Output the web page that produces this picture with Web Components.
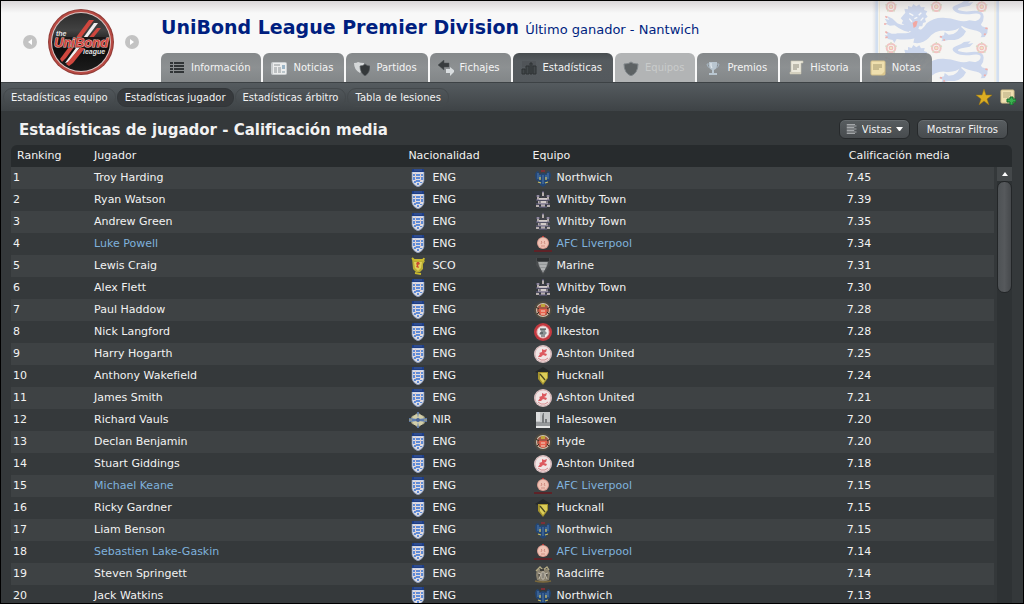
<!DOCTYPE html>
<html lang="es">
<head>
<meta charset="utf-8">
<title>UniBond League Premier Division</title>
<style>
body {
  margin: 0;
  background: #34383a;
  color: #f2f2f2;
  font-family: "DejaVu Sans", sans-serif;
  font-size: 11px;
}
</style>
</head>
<body>
<league-screen>
  <league-header slot="header" name="UniBond League Premier Division" note="Último ganador - Nantwich">
    <header-tab icon="list">Información</header-tab>
    <header-tab icon="news">Noticias</header-tab>
    <header-tab icon="shields">Partidos</header-tab>
    <header-tab icon="arrows">Fichajes</header-tab>
    <header-tab icon="chart" active>Estadísticas</header-tab>
    <header-tab icon="shield" disabled>Equipos</header-tab>
    <header-tab icon="cup">Premios</header-tab>
    <header-tab icon="scroll">Historia</header-tab>
    <header-tab icon="note">Notas</header-tab>
  </league-header>
  <sub-nav slot="nav">
    <sub-link>Estadísticas equipo</sub-link>
    <sub-link active>Estadísticas jugador</sub-link>
    <sub-link>Estadísticas árbitro</sub-link>
    <sub-link>Tabla de lesiones</sub-link>
  </sub-nav>
  <stats-toolbar slot="toolbar">Estadísticas de jugador - Calificación media</stats-toolbar>
  <player-ranking slot="list"></player-ranking>
</league-screen>

<script>
const icons = {
  list: `<g fill="#303436"><path d="M1 2h3v2H1zM5 2h10v2H5zM1 5h3v2H1zM5 5h10v2H5zM1 8h3v2H1zM5 8h10v2H5zM1 11h3v2H1zM5 11h10v2H5z"/></g>`,
  news: `<rect x="0" y="2" width="16" height="13" rx="2" fill="#c9cdcf"/><rect x="2" y="3" width="13" height="11" fill="#eceded"/>
    <path d="M3 5h6M3 8h3M7 8h3M3 10h3M7 10h3M3 12h3M7 12h3" stroke="#8d9396"/><rect x="11" y="5" width="3" height="4" fill="#9ab4c6"/><path d="M11 11h3v2h-3z" fill="#b9c4ca"/>`,
  shields: `<path d="M0 3q3 0 4-1 2 1 6 1v4l-4 6Q0 10 0 3z" fill="#d5d8d9"/><path d="M6 6q3 0 5-2 2 2 5 2 0 7-5 10-5-3-5-10z" fill="#34383a" stroke="#5d6264" stroke-width=".7"/>`,
  arrows: `<path d="M0 5l6-5v3h5v4H6v3z" fill="#383c3e" stroke="#4d5254" stroke-width=".5"/><path d="M17 11l-5-4v2H8v4h4v3z" fill="#d9dddf"/>`,
  chart: `<path d="M1 2h14M1 4h14M1 6h14" stroke="#4a4f52"/><g fill="#43484b" stroke="#2e3235"><path d="M1 9h3v5H1zM5 6h3v8H5zM9 3h2v11H9zM12 6h3v8h-3z"/></g>`,
  shield: `<path d="M1 4q5 0 7-2 2 2 7 2 0 9-7 12-7-3-7-12z" fill="#5d6264" stroke="#80868a"/>`,
  cup: `<path d="M4 2h8v3q0 4-3 5v3h3v2H4v-2h3v-3Q4 9 4 5z" fill="#b9c6d0"/><path d="M4 4H2q0 3 3 4M12 4h2q0 3-3 4" fill="none" stroke="#a7b6c2"/><path d="M6 3v3l1 2" stroke="#e8eef2" fill="none"/>`,
  scroll: `<path d="M3 1h12v2h-2v11H2v-2h1z" fill="#ece9dd" stroke="#c6c2b0" stroke-width=".6"/><path d="M5 5h6M5 7h6M5 9h4" stroke="#8e8b7d"/><path d="M2 12h11v2H2z" fill="#d3cfbe"/>`,
  note: `<rect x="1" y="1" width="14" height="14" rx="1" fill="#efdfae" stroke="#d3c08a"/><path d="M3 5h9M3 7h9M3 9h6" stroke="#a4986f"/><path d="M15 11l-4 4h4z" fill="#d9c58d"/>`,
  noteAdd: `<rect x="1" y="1" width="13" height="13" rx="1" fill="#f0e0b2" stroke="#d5c28d"/><path d="M3 4h8M3 6h8M3 8h6" stroke="#b5a87e"/><path d="M10 8h3v2h3v3h-3v3h-3v-3H7v-3h3z" fill="#3bb150" stroke="#14692a"/>`,
  star: `<path d="M8 0l2 6h6l-5 4 2 6-5-4-5 4 2-6-5-4h6z" fill="#dcae22" stroke="#9b7511" stroke-width=".5"/>`,
  lines: `<path d="M1 2h11M1 4h13M1 6h10M1 8h13M1 10h10M1 12h13M1 14h11" stroke="#c0c3c5"/>`
};

const crests = {
  eng: `<path d="M3 1h12v11q-1 4-6 6-5-2-6-6z" fill="#cfd6e6"/><path d="M4 4h10v8q-1 3-5 5-4-2-5-5z" fill="#e0dde2"/><path d="M3 0h12v3H3z" fill="#1d3d86"/><path d="M5 1h8" stroke="#4a64a0" stroke-width=".8"/>
    <g fill="#5f8bd6"><path d="M4 5h2v2H4zM7 5h4v2H7zM12 5h2v2h-2zM4 8h2v3H4zM7 8h4v2H7zM12 8h2v3h-2zM5 12h2v2H5zM7 11h4v2H7zM11 13h2v1h-2zM8 14h2v2H8z"/></g>
    <path d="M6 5h1M11 5h1M6 8h1M11 8h1M6 11h1M11 11h1" stroke="#e3b0a6"/><path d="M3 3v9q1 4 6 6 5-2 6-6V3" fill="none" stroke="#7d8cae" stroke-width=".7"/>`,
  sco: `<path d="M3 1l3 2h8l2 1-2 3v5l-3 3H7l-3-3z" fill="#b9ad34"/><path d="M3 1l2 2M15 1l-1 3M6 16l6 1M5 3h9" stroke="#c8b92f" stroke-width="2"/><path d="M5 5h8l-1 6-3 3-3-3z" fill="#e0d25a"/><path d="M8 5h2l1 2-2 1 1 3-3-1 1-2-1-1z" fill="#c94a32"/>`,
  nir: `<path d="M9 1l3 3 3 1 2 4-2 4-3 1-3 3-3-3-3-1-2-4 2-4 3-1z" fill="#a9a682"/><circle cx="9" cy="9" r="6" fill="#d2cea9"/><path d="M8 1h2l-1 6 1 1 8-1v4l-8-1-1 1 1 6H8l1-6-1-1-8 1V7l8 1 1-1z" fill="#5d7cb0"/><circle cx="9" cy="9" r="2" fill="#4a6699"/><path d="M0 9h3M15 9h3" stroke="#b7ac6d"/>`,
  northwich: `<path d="M9 4L6 5 4 2 2 3 1 6l1 5 3 2 1 3 3 2 3-2 1-3 3-2 1-5-1-3-2-1-2 3z" fill="#234674"/><path d="M4 4v6M14 4v6M9 6v9M6 6v4M12 6v4" stroke="#4a74a8" stroke-width="1.2"/><path d="M6 8v3M12 8v3M4 13l3 1M14 13l-3 1" stroke="#c9bd62" stroke-width="1.3"/><path d="M7 1h4v2H7z" fill="#7c3038"/>`,
  whitby: `<path d="M8 1h2v4H8zM3 4h2v3H3zM13 4h2v3h-2zM3 7h12v2H3zM4 10h10v3H4zM2 14h3v2H2zM7 13h4v3H7zM13 14h3v2h-3z" fill="#b5adac"/><path d="M2 5h4M12 5h4M2 9h14M2 13h14M5 16h8M9 0v2" stroke="#6a648a"/><path d="M5 8h8M6 11h6" stroke="#ece5e3"/><path d="M7 6h4M5 11h2M12 11h2" stroke="#494454"/>`,
  liverpool: `<circle cx="9" cy="8" r="6" fill="#dd9f93"/><circle cx="9" cy="8" r="5" fill="#efc3b5"/><path d="M7 6l1 1-1 2M11 6l-1 1 1 2M7 11h4" stroke="#d08e82" fill="none"/><path d="M8 1h2v1H8z" fill="#b73935"/><path d="M0 15h18v2H0z" fill="#5e2227"/>`,
  marine: `<path d="M2 1h14v7l-7 10-7-10z" fill="#484b4d"/><path d="M3 1h12v3H3z" fill="#2d3032"/><path d="M4 5h10l-1 4-4 7-4-7z" fill="#96999a"/><path d="M5 6h8" stroke="#b9bbbc"/><path d="M6 9h6M7 12h4" stroke="#c9cacb"/>`,
  hyde: `<circle cx="9" cy="9" r="9" fill="#4d4940"/><circle cx="9" cy="9" r="7" fill="#cfc4b0"/><circle cx="9" cy="9" r="6" fill="#a55645"/><path d="M5 8h8l-1 5-3 2-3-2z" fill="#e8614d"/><path d="M7 10h4M7 13h4" stroke="#f0d9c4"/><path d="M7 3h4v3H7z" fill="#c0a53c"/><path d="M2 6l3 2M16 6l-3 2M3 13l2-2M15 13l-2-2" stroke="#342e27"/>`,
  ilkeston: `<circle cx="9" cy="9" r="9" fill="#c43a40"/><circle cx="9" cy="9" r="6" fill="#eee9e9" stroke="#e8b3b4"/><path d="M6 6h6l-1 2 2 2-2 2H7l-2-1 2-2z" fill="#8b9294"/><path d="M6 6h6M6 10h3M7 13h4" stroke="#3a4143"/>`,
  ashton: `<circle cx="9" cy="9" r="9" fill="#dcc9c9"/><circle cx="9" cy="9" r="8" fill="#f0e4e4" stroke="#cf9fa1" stroke-width=".6"/><path d="M8 4l2 1 3-1-1 3-2 1 3 1-1 2-3-1-2 2-3 0 2-3-1-1 3-1z" fill="#dc5a60"/><path d="M4 13l3 2h4l3-2" stroke="#d88b8e" fill="none"/>`,
  hucknall: `<path d="M9 0l8 5-3 1H4L1 5z" fill="#26292a"/><path d="M4 5h10v6l-5 7-5-6z" fill="#a5942f"/><path d="M6 6h7v5l-4 5-3-4z" fill="#dccd58"/><path d="M6 7l5 6" stroke="#4b4822" stroke-width="1.3"/>`,
  halesowen: `<rect x="2" y="1" width="14" height="16" fill="#c4c6c7"/><path d="M2 11h14v4H2z" fill="#96999b"/><path d="M9 2h1v10H8V5zM11 8h2v4h-2z" fill="#777a7c"/><path d="M2 15h14v2H2z" fill="#e6e7e7"/><path d="M2 1h4v9H2z" fill="#dddedf"/>`,
  radcliffe: `<path d="M3 4h11l2 4-1 7-6 2-6-2-1-5z" fill="#8a8270"/><path d="M2 6l4-4 3 3 4-3 2 3" stroke="#b4aa84" stroke-width="1.3" fill="none"/><path d="M4 8l3 1-2 5M14 8l-3 1 2 5M8 7h2v7H8z" stroke="#c3bdb0" fill="#55514a"/><path d="M1 16q8 2 16 0" stroke="#7a683c" stroke-width="1.5" fill="none"/><path d="M6 4h4v2H6z" fill="#43413c"/>`
};

const svgIcon = (name) => `<svg width="16" height="16" viewBox="0 0 16 16" aria-hidden="true">${icons[name]}</svg>`;

// player, nation, crest key, club, rating
const players = [
  ["Troy Harding", "ENG", "northwich", "Northwich", "7.45"],
  ["Ryan Watson", "ENG", "whitby", "Whitby Town", "7.39"],
  ["Andrew Green", "ENG", "whitby", "Whitby Town", "7.35"],
  ["Luke Powell", "ENG", "liverpool", "AFC Liverpool", "7.34"],
  ["Lewis Craig", "SCO", "marine", "Marine", "7.31"],
  ["Alex Flett", "ENG", "whitby", "Whitby Town", "7.30"],
  ["Paul Haddow", "ENG", "hyde", "Hyde", "7.28"],
  ["Nick Langford", "ENG", "ilkeston", "Ilkeston", "7.28"],
  ["Harry Hogarth", "ENG", "ashton", "Ashton United", "7.25"],
  ["Anthony Wakefield", "ENG", "hucknall", "Hucknall", "7.24"],
  ["James Smith", "ENG", "ashton", "Ashton United", "7.21"],
  ["Richard Vauls", "NIR", "halesowen", "Halesowen", "7.20"],
  ["Declan Benjamin", "ENG", "hyde", "Hyde", "7.20"],
  ["Stuart Giddings", "ENG", "ashton", "Ashton United", "7.18"],
  ["Michael Keane", "ENG", "liverpool", "AFC Liverpool", "7.15"],
  ["Ricky Gardner", "ENG", "hucknall", "Hucknall", "7.15"],
  ["Liam Benson", "ENG", "northwich", "Northwich", "7.15"],
  ["Sebastien Lake-Gaskin", "ENG", "liverpool", "AFC Liverpool", "7.14"],
  ["Steven Springett", "ENG", "radcliffe", "Radcliffe", "7.14"],
  ["Jack Watkins", "ENG", "northwich", "Northwich", "7.13"]
];

class ShadowElement extends HTMLElement {
  connectedCallback() {
    if (this.shadowRoot) return;
    this.attachShadow({ mode: "open" });
    this.shadowRoot.innerHTML = this.render();
  }
}

class LeagueScreen extends ShadowElement {
  render() {
    return `
<style>
:host {
  box-sizing: border-box;
  display: flex;
  flex-direction: column;
  height: 100vh;
  overflow: hidden;
  border: 1px solid #000;
  background: #34383a;
}
.list {
  flex: 1;
  min-height: 0;
  overflow: hidden;
  display: grid;
  padding: 0 11px 0 10px;
}
</style>
<slot name="header"></slot>
<slot name="nav"></slot>
<slot name="toolbar"></slot>
<main class="list"><slot name="list"></slot></main>
`;
  }
}

class LionCrest extends ShadowElement {
  render() {
    return `
<style>
:host { display: block; }
svg { display: block; }
</style>
<svg width="130" height="81" viewBox="36 3 390 243" aria-hidden="true">
  <defs>
    <g id="lion" fill="#ccd7ed">
      <path d="M136 38l-3-12 11 2 0-10 11 3 5-9 9 7 9-6 5 9 11-1-2 9 10 4-5 8 6 8-8 6 3 10-9 3-2 10-9 0-4 10-10 1-4 9-11-6-7-8-7 2-2-12-8-5 4-8-7-7z"/>
      <path d="M140 74q-14 4-28-4l-14-14-12-6-6-2 8 12-14-4 8 12-8 2 16 7 14-1q12 10 28 16l14 4 10-12z"/>
      <path d="M168 84q-14 14-30 16l-26 0q-12 4-24-2l-10-4 5 12-9-1 10 12 14 3 5 9 7-12q30 4 56-2l26-10 6-10z"/>
      <path d="M168 94q20-2 32-24 20-18 50-17 24 1 42 8 20 6 36 0 34 2 38 18l17 6-1 14-8 12-12 1q10-14-12-20-28-4-44-14-20 18-52 14-28-2-48 22-20 20-46 14z"/>
      <path d="M300 78q-4 16-20 24l-14 2-12-8-2 10-16 4 12 6-4 8 22-4 18 0q24-4 34-26z"/>
      <path d="M336 66q26-4 26-18 0-10-22-7-36 5-53-5-20-13 2-21 14-4 23-12l20-2-8 8 16-3-11 11-24 5q-18 5-8 9 16 5 38 2 36-3 36 17 0 26-26 30z"/>
      <path d="M148 40l12 7M184 38l-8 8M163 56l9-4M148 56l8 10M182 62l8-9" stroke="#f6f7f8" stroke-width="4" fill="none"/>
      <path d="M158 69l8-6 7 1-4 15-8 5z" fill="#f2a7a1"/>
      <path d="M76 49l6 4M72 72l7 0M76 95l6 4M76 113l7-2M376 84l7 2M372 104l5-3M240 110l6 1M250 121l5-2" stroke="#efb0ac" stroke-width="5"/>
    </g>
    <g id="rose">
      <circle r="16" fill="#f2c4c2"/>
      <path d="M0-18l0 6M17-6l-6 2M11 14l-4-5M-11 14l4-5M-17-6l6 2" stroke="#d4dcc4" stroke-width="4"/>
      <circle r="10" fill="#f5f1ed"/><circle r="7" fill="#f0bbb8"/><circle r="4" fill="#f0e6c2"/>
    </g>
    <linearGradient id="edge"><stop offset="0" stop-color="#f8f8f8"/><stop offset="1" stop-color="#dfe0e4"/></linearGradient>
  </defs>
  <rect x="36" y="0" width="14" height="250" fill="url(#edge)"/>
  <rect x="46" y="-20" width="374" height="280" fill="#f5f5f3"/>
  <path d="M50 0v250M413 0v250" stroke="#d2dff0" stroke-width="8"/>
  <path d="M58 0v250M405 0v250" stroke="#eee9d6" stroke-width="3"/>
  <use href="#lion"/><use href="#lion" y="123"/>
  <use href="#rose" x="93" y="20"/><use href="#rose" x="229" y="20"/><use href="#rose" x="365" y="20"/>
  <use href="#rose" x="93" y="144"/><use href="#rose" x="229" y="144"/><use href="#rose" x="365" y="144"/>
</svg>
`;
  }
}

class LeagueBadge extends ShadowElement {
  render() {
    return `
<style>
:host { display: block; }
svg { display: block; }
text { font-family: "Liberation Sans", Arial, sans-serif; font-weight: bold; font-style: italic; }
</style>
<svg width="68" height="68" viewBox="0 0 68 68" role="img" aria-label="the UniBond league">
  <defs>
    <linearGradient id="face" x2="0" y2="1"><stop offset="0" stop-color="#2c2c2c"/><stop offset=".3" stop-color="#424242"/><stop offset=".6" stop-color="#0c0c0c"/><stop offset="1" stop-color="#1c1c1c"/></linearGradient>
  </defs>
  <circle cx="34" cy="34" r="33" fill="#8f3a35"/>
  <circle cx="34" cy="34" r="32" fill="#b84a43"/>
  <circle cx="34" cy="34" r="30" fill="#d9c4c2"/>
  <circle cx="34" cy="34" r="29" fill="url(#face)"/>
  <path d="M42 12h5L19 50l-4 4-2-3z" fill="#cf473e"/>
  <path d="M47 15h4L22 54l-4 1z" fill="#efefef"/>
  <path d="M50 20h4L26 55l-4 3-3-2z" fill="#cf473e"/>
  <path d="M8 29h53l-2 11H6z" fill="#1b1616"/>
  <text x="9" y="28" font-size="7" fill="#e1e1e1">the</text>
  <text x="7" y="39" font-size="13" fill="#cf473e" stroke="#f0c4bf" stroke-width="1" paint-order="stroke">UniBond</text>
  <text x="36" y="46" font-size="7" fill="#e1e1e1">league</text>
</svg>
`;
  }
}

class LeagueHeader extends ShadowElement {
  render() {
    return `
<style>
:host {
  display: flex;
  position: relative;
  flex: none;
  height: 81px;
  background: #f8f8f8;
}
.backdrop {
  position: absolute;
  right: 21px;
  top: 0;
}
.shade {
  position: absolute;
  inset: 0 0 auto;
  height: 12px;
  background: linear-gradient(#8c808848, #8c808800);
}
.badge {
  display: flex;
  flex: none;
  align-items: center;
  gap: 10px;
  padding: 0 22px;
}
.badge button {
  display: grid;
  place-items: center;
  width: 14px;
  height: 14px;
  padding: 0;
  border: 0;
  border-radius: 50%;
  background: #c3c3c3;
}
.main {
  position: relative;
  flex: 1;
  display: flex;
  flex-direction: column;
  justify-content: space-between;
}
.title {
  display: flex;
  align-items: baseline;
  gap: 6px;
  padding-top: 14px;
  color: #001f80;
  white-space: nowrap;
}
h1 {
  margin: 0;
  font-size: 19px;
  line-height: 24px;
}
p {
  margin: 0;
  font-size: 13px;
}
nav {
  display: flex;
  gap: 2px;
}
</style>
<lion-crest class="backdrop"></lion-crest>
<div class="shade"></div>
<div class="badge">
  <button aria-label="Anterior"><svg width="8" height="8" viewBox="0 0 8 8"><path d="M6 1v6L2 4z" fill="#fff"/></svg></button>
  <league-badge></league-badge>
  <button aria-label="Siguiente"><svg width="8" height="8" viewBox="0 0 8 8"><path d="M2 1v6l4-3z" fill="#fff"/></svg></button>
</div>
<div class="main">
  <div class="title">
    <h1>${this.getAttribute("name")}</h1>
    <p>${this.getAttribute("note")}</p>
  </div>
  <nav><slot></slot></nav>
</div>
`;
  }
}

class HeaderTab extends ShadowElement {
  render() {
    return `
<style>
:host { display: block; }
a {
  display: flex;
  align-items: center;
  gap: 6px;
  height: 29px;
  padding: 0 11px 0 8px;
  border-radius: 6px 6px 0 0;
  background: linear-gradient(#7d8183ee, #85898bee 50%, #7a7e80ee);
  color: #f4f4f4;
  font-size: 10px;
  text-decoration: none;
  white-space: nowrap;
}
:host([active]) a {
  background: linear-gradient(#484d50, #565b5f 8px, #54595d);
}
:host([disabled]) a {
  background: #b2b4b5;
  color: #c9cbcb;
}
svg { flex: none; }
</style>
<a href="#">${svgIcon(this.getAttribute("icon"))}<span><slot></slot></span></a>
`;
  }
}

class SubNav extends ShadowElement {
  render() {
    return `
<style>
:host {
  display: flex;
  flex: none;
  align-items: center;
  justify-content: space-between;
  height: 28px;
  padding: 0 7px 0 2px;
  border-top: 1px solid #3d4245;
  background: linear-gradient(#555b5f, #3e4346);
}
nav {
  display: flex;
  gap: 1px;
}
.tools {
  display: flex;
  gap: 8px;
}
button {
  width: 16px;
  height: 16px;
  padding: 0;
  border: 0;
  background: none;
}
</style>
<nav><slot></slot></nav>
<div class="tools">
  <button aria-label="Favorito">${svgIcon("star")}</button>
  <button aria-label="Añadir nota">${svgIcon("noteAdd")}</button>
</div>
`;
  }
}

class SubLink extends ShadowElement {
  render() {
    return `
<style>
:host { display: block; }
a {
  display: block;
  padding: 0 7px;
  border: 1px solid #44494c;
  border-radius: 9px;
  color: #f2f2f2;
  font-size: 10px;
  line-height: 17px;
  text-decoration: none;
  white-space: nowrap;
}
:host([active]) a {
  background: #36393c;
  border-color: #323639;
}
</style>
<a href="#"><slot></slot></a>
`;
  }
}

class StatsToolbar extends ShadowElement {
  render() {
    return `
<style>
:host {
  box-sizing: border-box;
  display: flex;
  flex: none;
  align-items: center;
  gap: 7px;
  height: 34px;
  padding: 2px 15px 0 18px;
}
h2 {
  flex: 1;
  margin: 0;
  font-size: 15px;
  line-height: 20px;
  padding-top: 2px;
  white-space: nowrap;
}
button, .views {
  box-sizing: border-box;
  display: flex;
  align-items: center;
  height: 20px;
  padding: 0 9px;
  border: 1px solid #26292b;
  border-radius: 6px;
  background: linear-gradient(#585d60, #474b4e);
  box-shadow: inset 0 1px #666b6e;
}
.views {
  gap: 4px;
  padding: 0 6px;
}
button, select {
  color: #f2f2f2;
  font-family: inherit;
  font-size: 10px;
}
select {
  appearance: none;
  padding: 0;
  border: 0;
  background: none;
}
</style>
<h2><slot></slot></h2>
<label class="views">
  <svg width="12" height="12" viewBox="0 0 16 16" aria-hidden="true">${icons.lines}</svg>
  <select aria-label="Vistas"><option>Vistas</option></select>
  <svg width="7" height="4" viewBox="0 0 7 4" aria-hidden="true"><path d="M0 0h7L4 4H3z" fill="#fff"/></svg>
</label>
<button>Mostrar Filtros</button>
`;
  }
}

class TeamCrest extends ShadowElement {
  render() {
    return `
<style>
:host {
  display: grid;
  place-items: center;
  width: 20px;
}
svg { display: block; }
</style>
<svg width="18" height="18" viewBox="0 0 18 18" aria-hidden="true">${crests[this.getAttribute("name")]}</svg>
`;
  }
}

class PlayerRanking extends ShadowElement {
  renderRow([player, nation, crest, club, rating], index) {
    return `<tr class="${crest === "liverpool" ? "own" : ""}">
  <td>${index + 1}</td>
  <td><a href="#">${player}</a></td>
  <td><div class="team"><team-crest name="${nation.toLowerCase()}"></team-crest>${nation}</div></td>
  <td><div class="team"><team-crest name="${crest}"></team-crest><a href="#">${club}</a></div></td>
  <td>${rating}</td>
</tr>`;
  }

  render() {
    return `
<style>
:host {
  display: grid;
  grid-template-columns: 1fr 18px;
  align-items: start;
  height: 100%;
  min-height: 0;
  overflow: hidden;
  border-radius: 6px 6px 0 0;
}
table {
  width: 100%;
  table-layout: fixed;
  border-spacing: 0;
}
th, td {
  height: 22px;
  padding: 0;
  line-height: 18px;
  text-align: left;
  white-space: nowrap;
}
th {
  background: #272b2d;
  font-weight: normal;
}
td:first-child, th:last-child { padding-left: 2px; }
th:first-child { padding-left: 6px; }
tbody tr:nth-child(odd) { background: #3e4244; }
tbody tr:nth-child(even) { background: #35393b; }
.team {
  display: flex;
  align-items: center;
  gap: 4px;
}
a {
  color: inherit;
  text-decoration: none;
}
.own a { color: #7fb1dc; }
.side {
  display: flex;
  flex-direction: column;
  height: 100%;
}
.cap {
  flex: none;
  height: 22px;
  background: #272b2d;
}
.bar {
  flex: 1;
  margin-left: 3px;
  background: #2e3234;
}
.bar button {
  display: grid;
  place-items: center;
  width: 100%;
  height: 14px;
  padding: 0;
  border: 0;
  background: #44484a;
}
.thumb {
  box-sizing: border-box;
  height: 112px;
  border: 1px solid #232628;
  border-radius: 7px;
  background: linear-gradient(90deg, #4e5255, #56595c 50%, #46494c);
}
</style>
<table>
  <colgroup><col style="width:83px"><col style="width:314px"><col style="width:124px"><col style="width:314px"><col style="width:147px"></colgroup>
  <thead><tr><th>Ranking</th><th>Jugador</th><th>Nacionalidad</th><th>Equipo</th><th>Calificación media</th></tr></thead>
  <tbody>${players.map(this.renderRow).join("")}</tbody>
</table>
<div class="side">
  <div class="cap"></div>
  <div class="bar">
    <button aria-label="Subir"><svg width="6" height="4" viewBox="0 0 6 4"><path d="M3 0l3 4H0z" fill="#fff"/></svg></button>
    <div class="thumb"></div>
  </div>
</div>
`;
  }
}

customElements.define("league-screen", LeagueScreen);
customElements.define("lion-crest", LionCrest);
customElements.define("league-badge", LeagueBadge);
customElements.define("league-header", LeagueHeader);
customElements.define("header-tab", HeaderTab);
customElements.define("sub-nav", SubNav);
customElements.define("sub-link", SubLink);
customElements.define("stats-toolbar", StatsToolbar);
customElements.define("team-crest", TeamCrest);
customElements.define("player-ranking", PlayerRanking);
</script>
</body>
</html>
